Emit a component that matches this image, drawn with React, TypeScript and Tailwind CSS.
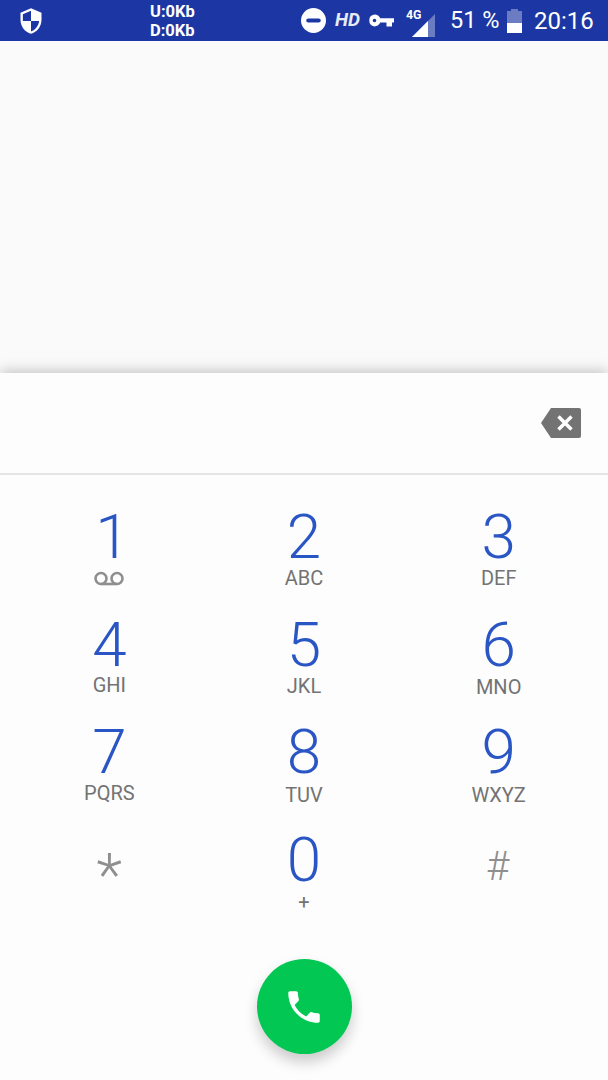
const keys = [
  { digit: "1", label: "", labelClass: "" },
  { digit: "2", label: "ABC", labelClass: "mt-[1px]" },
  { digit: "3", label: "DEF", labelClass: "mt-[1px]" },
  { digit: "4", label: "GHI", labelClass: "mt-0" },
  { digit: "5", label: "JKL", labelClass: "mt-[1px]" },
  { digit: "6", label: "MNO", labelClass: "mt-[2px]" },
  { digit: "7", label: "PQRS", labelClass: "mt-[1px]" },
  { digit: "8", label: "TUV", labelClass: "mt-[3px]" },
  { digit: "9", label: "WXYZ", labelClass: "mt-[3px]" },
];

function ShieldIcon() {
  return (
    <svg viewBox="0 0 24 24" className="h-[28px] w-[28px]" fill="#fff">
      <path d="M12 1 3 5v6c0 5.550 3.840 10.740 9 12 5.160-1.260 9-6.450 9-12V5l-9-4Zm0 10.990h7c-.53 4.120-3.280 7.790-7 8.940V12H5V6.300l7-3.110v8.800Z" />
    </svg>
  );
}

function VoicemailIcon() {
  return (
    <svg viewBox="0 0 32 16" className="h-[16px] w-[32px]" fill="none" stroke="#8f8f8f" strokeWidth="2.600">
      <circle cx="8" cy="8.500" r="5.500" />
      <circle cx="24" cy="8.500" r="5.500" />
      <path d="M8 14h16" />
    </svg>
  );
}

function StatusBar() {
  return (
    <div className="flex h-[41px] items-center bg-[#1c37a4] text-white">
      <div className="ml-[17px] w-[133px]">
        <ShieldIcon />
      </div>
      <div className="mt-[1px] w-[60px] text-[16.500px] leading-[19px] font-bold">
        <div>U:0Kb</div>
        <div>D:0Kb</div>
      </div>
      <div className="ml-[91px] flex h-full items-center whitespace-nowrap">
        <svg viewBox="0 0 24 24" className="h-[25px] w-[25px]" fill="#fff">
          <path d="M12 0a12 12 0 1 0 0 24 12 12 0 0 0 0-24Zm5 14H7a2 2 0 0 1 0-4h10a2 2 0 0 1 0 4Z" fillRule="evenodd" />
        </svg>
        <span className="ml-[9px] w-[24px] text-[19px] font-bold italic opacity-90">HD</span>
        <svg viewBox="0 0 26 13" className="ml-[9px] h-[13px] w-[26px]" fill="#fff">
          <path d="M6.500 0.500c2.700 0 4.900 1.500 5.700 3.700H26v4.300h-2V12.500h-5.500V8.500h-6.300c-.8 2.300-3 3.900-5.700 3.900a6 6 0 0 1 0-11.900Zm0 4.200a1.800 1.800 0 1 0 0 3.600 1.800 1.800 0 0 0 0-3.600Z" fillRule="evenodd" />
        </svg>
        <div className="relative ml-[12px] h-[28px] w-[29px]">
          <span className="absolute top-[1px] left-0 origin-left scale-x-[0.95] text-[13px] leading-[13px] font-bold">4G</span>
          <svg viewBox="0 0 23 23" className="absolute right-0 bottom-[-2px] h-[23px] w-[23px]">
            <path d="M23 0v23H0Z" fill="#fff" fillOpacity="0.35" />
            <path d="M16 7v16H0Z" fill="#fff" />
          </svg>
        </div>
        <span className="ml-[15px] w-[48px] text-[23.500px]">51 %</span>
        <svg viewBox="0 0 15 24" className="ml-[9px] h-[24px] w-[15px]">
          <path d="M4 0h7v2h4v22H0V2h4Z" fill="#fff" fillOpacity="0.35" />
          <path d="M0 14h15v10H0Z" fill="#fff" />
        </svg>
        <span className="ml-[12px] text-[24px]">20:16</span>
      </div>
    </div>
  );
}

function Key({ digit, label, labelClass, index }: { digit: string; label: string; labelClass: string; index: number }) {
  return (
    <div className="flex h-[107.5px] flex-col items-center pt-[4px]">
      <span className={index === 0 ? "ml-[6px] h-[58px] text-[62px] leading-[58px] font-light text-[#2a55c4]" : "h-[58px] text-[62px] leading-[58px] font-light text-[#2a55c4]"}>
        {digit}
      </span>
      {index === 0 ? (
        <div className="mt-[4px]">
          <VoicemailIcon />
        </div>
      ) : (
        <span className={`${labelClass} text-[20px] leading-[22px] text-[#737373]`}>{label}</span>
      )}
    </div>
  );
}

export default function App() {
  return (
    <div className="relative flex h-[1080px] w-[608px] flex-col overflow-hidden bg-[#fafafa] font-['Roboto',sans-serif]">
      <StatusBar />
      {/* Call log area */}
      <div className="h-[332px] bg-[#fafafa]" />
      {/* Dialpad sheet */}
      <div className="flex-1 bg-[#fdfdfd] shadow-[0_-3px_12px_rgba(0,0,0,0.2)]">
        <div className="flex h-[102px] items-center justify-end border-b-2 border-[#e4e4e4] pr-[27px]">
          <svg viewBox="0 0 40 30" className="h-[30px] w-[40px]">
            <path d="M10 0h28a2 2 0 0 1 2 2v26a2 2 0 0 1-2 2H10L0 15Z" fill="#737373" />
            <path d="m17.500 8.500 13 13M30.500 8.500l-13 13" stroke="#fff" strokeWidth="3.500" />
          </svg>
        </div>
        <div className="grid grid-cols-3 px-3 pt-[29px]">
          {keys.map((key, idx) => (
            <Key key={key.digit} digit={key.digit} label={key.label} labelClass={key.labelClass} index={idx} />
          ))}
          <div className="flex h-[107.5px] justify-center">
            <span className="mt-[15px] text-[60px] leading-[66px] font-light text-[#8f8f8f]">*</span>
          </div>
          <div className="flex h-[107.5px] flex-col items-center pt-[4px]">
            <span className="h-[58px] text-[62px] leading-[58px] font-light text-[#2a55c4]">0</span>
            <span className="mt-[2px] text-[20px] leading-[22px] text-[#737373]">+</span>
          </div>
          <div className="flex h-[107.5px] justify-center pr-[2px]">
            <span className="mt-[18px] text-[40px] leading-[44px] font-light text-[#8f8f8f]">#</span>
          </div>
        </div>
        <div className="mt-[25px] flex justify-center">
          <button className="flex h-[95px] w-[95px] items-center justify-center rounded-full bg-[#02c853] shadow-[0_8px_14px_rgba(0,0,0,0.2)]">
            <svg viewBox="0 0 24 24" className="h-[42px] w-[42px]" fill="#fff">
              <path d="M6.620 10.790c1.440 2.830 3.760 5.140 6.590 6.590l2.200-2.200c.27-.27.67-.36 1.020-.24 1.120.37 2.330.57 3.570.57.55 0 1 .45 1 1V20c0 .55-.45 1-1 1-9.390 0-17-7.610-17-17 0-.55.45-1 1-1h3.500c.55 0 1 .45 1 1 0 1.250.2 2.450.57 3.570.11.35.03.74-.25 1.020l-2.200 2.200Z" />
            </svg>
          </button>
        </div>
      </div>
    </div>
  );
}
